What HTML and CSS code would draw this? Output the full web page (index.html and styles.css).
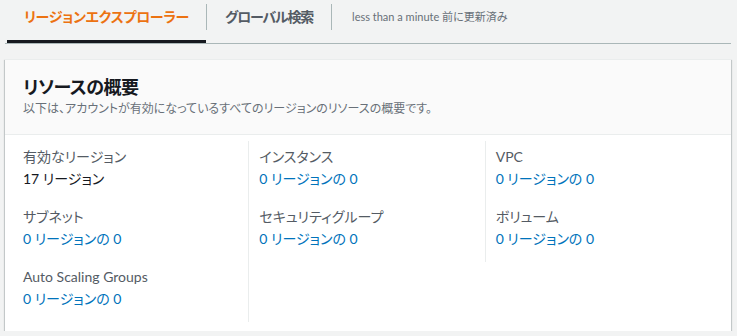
FILE: index.html
```html
<!DOCTYPE html>
<html lang="ja">
<head>
    <meta charset="UTF-8">
    <meta name="viewport" content="width=device-width, initial-scale=1.0">
    <title>リソースの概要</title>
    <link rel="stylesheet" href="styles.css">
</head>
<body>

    <div class="page">
        <div class="tabs">
            <div class="tab active"><span>リージョンエクスプローラー</span></div>
            <div class="sep"></div>
            <div class="tab tight"><span>グローバル検索</span></div>
            <div class="sep"></div>
            <div class="updated">less than a minute 前に更新済み</div>
        </div>

        <div class="card">
            <div class="card-header">
                <h2>リソースの概要</h2>
                <p>以下は、アカウントが有効になっているすべてのリージョンのリソースの概要です。</p>
            </div>
            <div class="card-body">
                <div class="column">
                    <div class="item">
                        <div class="label">有効なリージョン</div>
                        <div class="value">17 リージョン</div>
                    </div>
                    <div class="item">
                        <div class="label">サブネット</div>
                        <a class="value link" href="#">0 リージョンの 0</a>
                    </div>
                    <div class="item">
                        <div class="label">Auto Scaling Groups</div>
                        <a class="value link" href="#">0 リージョンの 0</a>
                    </div>
                </div>
                <div class="column">
                    <div class="item">
                        <div class="label">インスタンス</div>
                        <a class="value link" href="#">0 リージョンの 0</a>
                    </div>
                    <div class="item">
                        <div class="label">セキュリティグループ</div>
                        <a class="value link" href="#">0 リージョンの 0</a>
                    </div>
                </div>
                <div class="column last">
                    <div class="item">
                        <div class="label">VPC</div>
                        <a class="value link" href="#">0 リージョンの 0</a>
                    </div>
                    <div class="item">
                        <div class="label">ボリューム</div>
                        <a class="value link" href="#">0 リージョンの 0</a>
                    </div>
                </div>
            </div>
        </div>
    </div>

</body>
</html>
```

FILE: styles.css
```css
body {
    margin: 0;
    background-color: #f2f3f3;
    font-family: Lato, "Noto Sans CJK JP", sans-serif;
    font-feature-settings: "palt";
    color: #16191f;
}
.page {
    padding: 0 6px 0 5px;
}
.tabs {
    display: flex;
    align-items: flex-start;
    height: 43px;
    border-bottom: 1px solid #aab7b8;
    padding-left: 2px;
}
.tab {
    position: relative;
    height: 43px;
    padding: 0 17px;
    font-size: 14px;
    font-weight: bold;
    letter-spacing: -0.3px;
    color: #545b64;
    line-height: 34px;
}
.tab.tight {
    padding: 0 18px;
    letter-spacing: -1.2px;
}
.tab.active {
    color: #ec7211;
}
.tab.active::after {
    content: "";
    position: absolute;
    left: 0;
    right: 0;
    bottom: 0;
    height: 3px;
    background-color: #16191f;
}
.sep {
    width: 1px;
    height: 26px;
    margin-top: 4px;
    background-color: #aab7b8;
}
.updated {
    padding-left: 20px;
    font-size: 11px;
    color: #687078;
    line-height: 34px;
}
.card {
    margin-top: 15px;
    background-color: #ffffff;
    border-top: 1px solid #eaeded;
    box-shadow: 0 1px 1px 0 rgba(0, 28, 36, 0.3), 1px 1px 1px 0 rgba(0, 28, 36, 0.15), -1px 1px 1px 0 rgba(0, 28, 36, 0.15);
}
.card-header {
    background-color: #fafafa;
    border-bottom: 1px solid #eaeded;
    padding: 16px 18px 17px;
}
.card-header h2 {
    margin: 0;
    font-size: 18px;
    line-height: 22px;
    font-weight: bold;
    letter-spacing: -0.5px;
}
.card-header p {
    margin: 3px 0 0;
    font-size: 12px;
    line-height: 16px;
    color: #687078;
}
.card-body {
    display: grid;
    grid-template-columns: repeat(3, 1fr);
    align-items: start;
    padding: 6px 9px 9px 8px;
}
.column {
    padding: 5px 0 12px 10px;
    border-right: 1px solid #eaeded;
}
.column.last {
    border-right: none;
}
.item {
    margin-bottom: 16px;
}
.item:last-child {
    margin-bottom: 0;
}
.label {
    font-size: 14px;
    line-height: 22px;
    color: #545b64;
}
.value {
    display: block;
    font-size: 14px;
    line-height: 22px;
    color: #16191f;
}
.link {
    color: #0073bb;
    text-decoration: none;
}
```
